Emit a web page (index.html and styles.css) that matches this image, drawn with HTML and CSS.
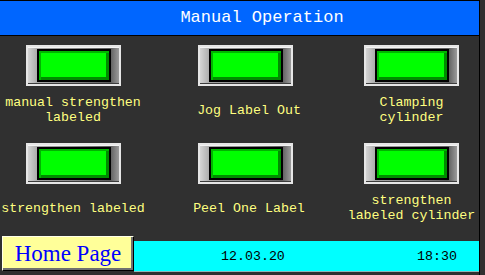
FILE: index.html
```html
<!DOCTYPE html>
<html lang="en">
<head>
<meta charset="UTF-8">
<meta name="viewport" content="width=device-width, initial-scale=1.0">
<title>Manual Operation</title>
<link rel="stylesheet" href="styles.css">
</head>
<body>
<div class="screen">
    <div class="title">Manual Operation</div>
    <div class="panel">
        <div class="cell">
            <div class="lamp"><div class="glass"></div></div>
            <div class="label">manual strengthen<br>labeled</div>
        </div>
        <div class="cell">
            <div class="lamp"><div class="glass"></div></div>
            <div class="label shift">Jog Label Out</div>
        </div>
        <div class="cell">
            <div class="lamp"><div class="glass"></div></div>
            <div class="label">Clamping<br>cylinder</div>
        </div>
        <div class="cell">
            <div class="lamp"><div class="glass"></div></div>
            <div class="label">strengthen labeled</div>
        </div>
        <div class="cell">
            <div class="lamp"><div class="glass"></div></div>
            <div class="label shift">Peel One Label</div>
        </div>
        <div class="cell">
            <div class="lamp"><div class="glass"></div></div>
            <div class="label">strengthen<br>labeled cylinder</div>
        </div>
    </div>
    <div class="status">
        <button class="home">Home Page</button>
        <div class="clock">
            <span>12.03.20</span>
            <span>18:30</span>
        </div>
    </div>
</div>
</body>
</html>
```

FILE: styles.css
```css
body {
    margin: 0;
    padding: 0;
    background-color: #303030;
    font-family: "Liberation Mono", "DejaVu Sans Mono", monospace;
}
.screen {
    width: 479px;
    height: 275px;
    border-right: 1px solid #000;
}
.title {
    height: 34px;
    line-height: 34px;
    border-top: 1px solid #000;
    border-bottom: 1px solid #000;
    background-color: #0066ff;
    color: #fff;
    font-size: 17px;
    text-align: center;
    padding-left: 45px;
}
.panel {
    display: grid;
    grid-template-columns: 146px 198px 135px;
    grid-template-rows: 98px 98px;
}
.cell {
    display: flex;
    flex-direction: column;
    align-items: center;
    padding-top: 9px;
}
.lamp {
    width: 95px;
    height: 41px;
    box-sizing: border-box;
    border: 2px solid #e6e6e6;
    padding: 2px 8px 2px 9px;
    background: linear-gradient(to right, #d4d4d4, #a4a4a4 12%, #8a8a8a 50%, #5c5c5c 90%, #9a9a9a);
    box-shadow: inset 0 -1px 0 #3c3c3c, inset 0 1px 0 #f4f4f4;
}
.glass {
    height: 100%;
    box-sizing: border-box;
    border: 2px solid #000;
    background-color: #00ff00;
    box-shadow: inset 2px 2px 0 #00b400, inset -3px -3px 0 #008c00;
}
.label {
    height: 48px;
    display: flex;
    align-items: center;
    justify-content: center;
    text-align: center;
    color: #ffff80;
    font-size: 13.3px;
    line-height: 15px;
    white-space: nowrap;
}
.shift {
    padding-left: 8px;
}
.status {
    display: flex;
    align-items: flex-start;
    padding-top: 4px;
}
.home {
    width: 132px;
    height: 35px;
    margin: 0 0 0 2px;
    padding: 0;
    box-sizing: border-box;
    border: 1px solid;
    border-color: #ffffe8 #000 #000 #ffffe8;
    box-shadow: inset -2px -2px 0 #707070;
    background-color: #ffff99;
    color: #0000ff;
    font-family: "Liberation Serif", serif;
    font-size: 23px;
    text-align: center;
}
.clock {
    flex: 1;
    height: 30px;
    margin-top: 5px;
    display: flex;
    align-items: center;
    justify-content: space-between;
    padding: 0 22px 0 87px;
    background-color: #00ffff;
    border-bottom: 1px solid #8fb8b8;
    font-size: 13.3px;
    color: #000;
}
```
